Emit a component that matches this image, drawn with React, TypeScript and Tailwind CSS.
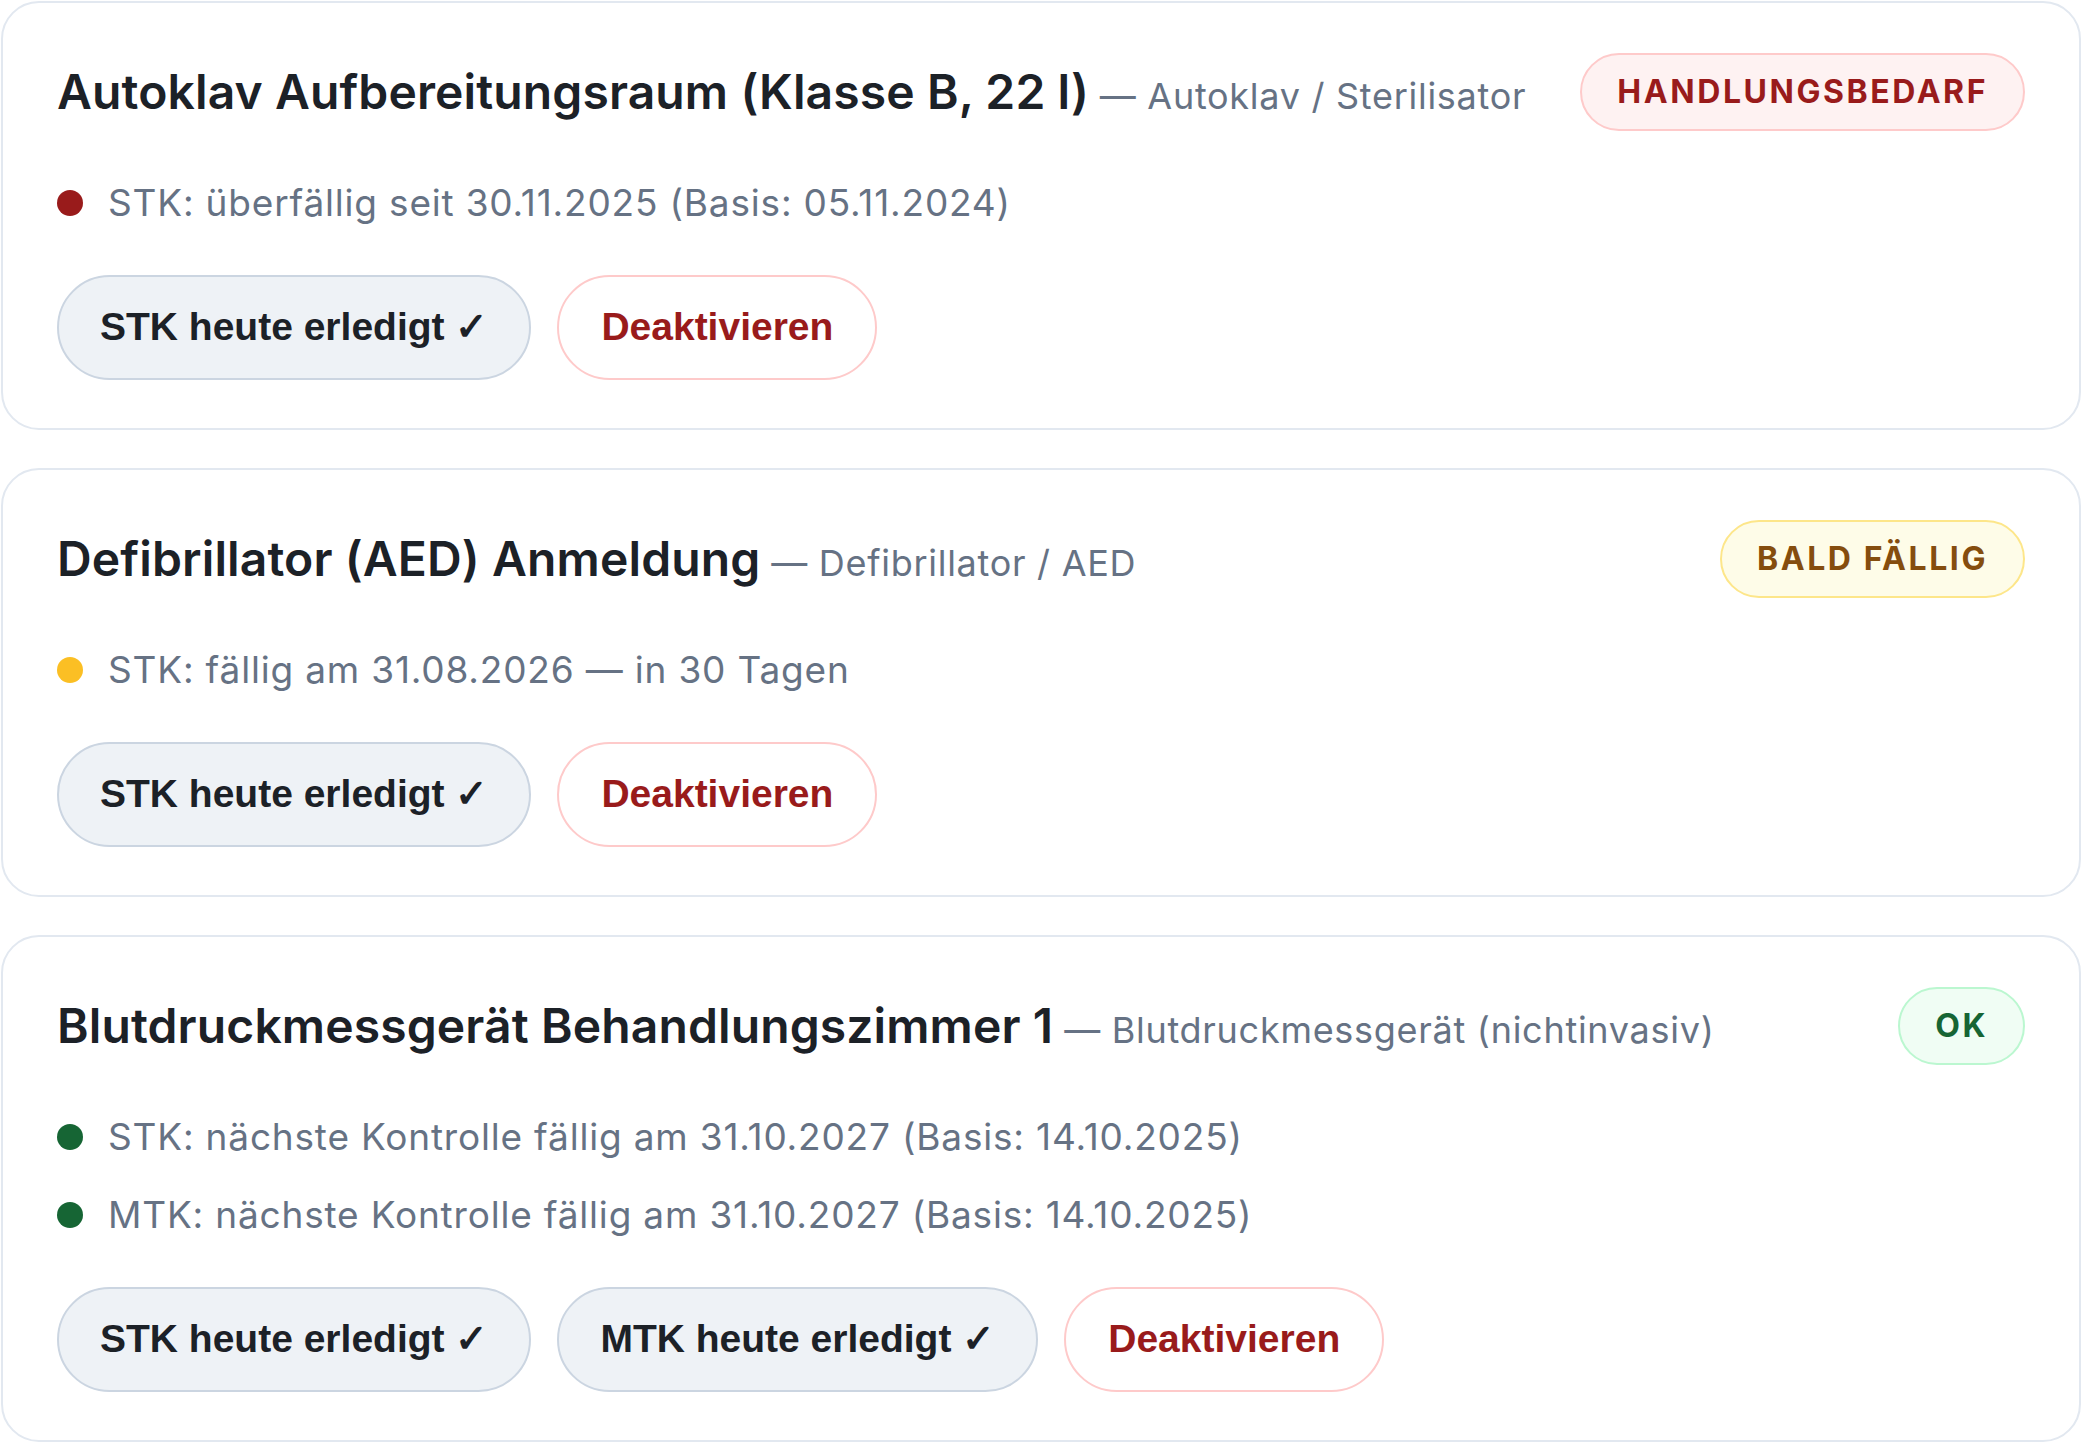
import React from "react";

type Tone = "red" | "yellow" | "green";

interface Device {
  title: string;
  type: string;
  badge: string;
  tone: Tone;
  lines: string[];
  buttons: string[];
}

const devices: Device[] = [
  {
    title: "Autoklav Aufbereitungsraum (Klasse B, 22 l)",
    type: "Autoklav / Sterilisator",
    badge: "HANDLUNGSBEDARF",
    tone: "red",
    lines: ["STK: überfällig seit 30.11.2025 (Basis: 05.11.2024)"],
    buttons: ["STK heute erledigt ✓"],
  },
  {
    title: "Defibrillator (AED) Anmeldung",
    type: "Defibrillator / AED",
    badge: "BALD FÄLLIG",
    tone: "yellow",
    lines: ["STK: fällig am 31.08.2026 — in 30 Tagen"],
    buttons: ["STK heute erledigt ✓"],
  },
  {
    title: "Blutdruckmessgerät Behandlungszimmer 1",
    type: "Blutdruckmessgerät (nichtinvasiv)",
    badge: "OK",
    tone: "green",
    lines: [
      "STK: nächste Kontrolle fällig am 31.10.2027 (Basis: 14.10.2025)",
      "MTK: nächste Kontrolle fällig am 31.10.2027 (Basis: 14.10.2025)",
    ],
    buttons: ["STK heute erledigt ✓", "MTK heute erledigt ✓"],
  },
];

function Badge({ tone, label }: { tone: Tone; label: string }) {
  const cls =
    tone === "red"
      ? "bg-[#fef2f2] border-[#fecaca] text-[#991b1b]"
      : tone === "yellow"
      ? "bg-[#fefce8] border-[#fde68a] text-[#854d0e]"
      : "bg-[#f0fdf4] border-[#bbf7d0] text-[#166534]";
  return (
    <span
      className={`flex h-[78px] shrink-0 items-center rounded-full border-2 px-[35px] text-[32px] font-bold tracking-[0.08em] ${cls}`}
    >
      {label}
    </span>
  );
}

function Dot({ tone }: { tone: Tone }) {
  const cls =
    tone === "red"
      ? "bg-[#991b1b]"
      : tone === "yellow"
      ? "bg-[#fbbf24]"
      : "bg-[#166534]";
  return <span className={`h-[26px] w-[26px] shrink-0 rounded-full ${cls}`} />;
}

function Card({ d }: { d: Device }) {
  return (
    <div className="flex flex-col gap-[44px] rounded-[38px] border-2 border-[#e2e8f0] bg-white px-[54px] pt-[50px] pb-[48px]">
      <div className="flex h-[78px] items-center justify-between gap-6">
        <div className="whitespace-nowrap">
          <span className="text-[48px] font-semibold tracking-[0.0025em] text-[#1c2127]">{d.title}</span>
          <span className="text-[36px] tracking-[0.02em] text-[#667284]"> — {d.type}</span>
        </div>
        <Badge tone={d.tone} label={d.badge} />
      </div>
      <div className="flex flex-col gap-[22px]">
        {d.lines.map((l, i) => (
          <div key={i} className="flex h-[56px] items-center gap-[25px]">
            <Dot tone={d.tone} />
            <span className="text-[37px] tracking-[0.022em] text-[#667284]">{l}</span>
          </div>
        ))}
      </div>
      <div className="flex gap-[26px]">
        {d.buttons.map((b, i) => (
          <button
            key={i}
            className="flex h-[105px] items-center rounded-full border-2 border-[#cbd5e1] bg-[#eef2f6] px-[41px] text-[39px] font-bold text-[#1c2127] [font-family:'Liberation_Sans',Arial,sans-serif]"
          >
            {b}
          </button>
        ))}
        <button className="flex h-[105px] items-center rounded-full border-2 border-[#fecaca] bg-white px-[42px] text-[39px] font-bold text-[#991b1b] [font-family:'Liberation_Sans',Arial,sans-serif]">
          Deaktivieren
        </button>
      </div>
    </div>
  );
}

export default function App() {
  return (
    <div className="min-h-[1443px] bg-white px-px pt-px [font-family:Inter,'Noto_Sans',sans-serif]">
      <div className="flex w-[2080px] flex-col gap-[38px]">
        {devices.map((d, i) => (
          <Card key={i} d={d} />
        ))}
      </div>
    </div>
  );
}
